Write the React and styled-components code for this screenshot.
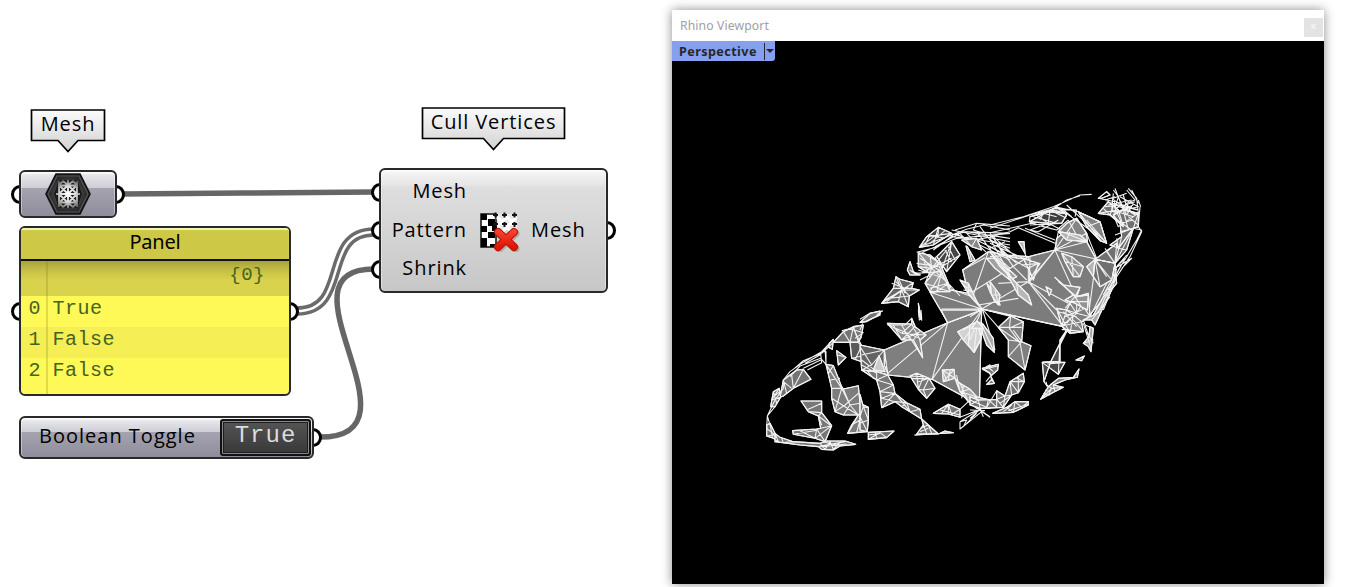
import React from "react";
import styled, { createGlobalStyle } from "styled-components";

const GlobalStyle = createGlobalStyle`
  * { box-sizing: border-box; }
  body { margin: 0; background: #fff; overflow: hidden; }
`;

const Page = styled.main`
  position: relative;
  display: flex;
  width: 1347px;
  height: 587px;
  overflow: hidden;
  font-family: "Noto Sans", "Open Sans", sans-serif;
`;

const Canvas = styled.section`
  position: relative;
  width: 672px;
  height: 587px;
  flex: none;
`;

const Wires = styled.svg`
  position: absolute;
  inset: 0;
`;

const Node = styled.div`
  position: absolute;
  left: ${(p) => p.$x}px;
  top: ${(p) => p.$y}px;
  width: ${(p) => p.$w}px;
  height: ${(p) => p.$h}px;
`;

const Body = styled.div`
  position: relative;
  display: flex;
  align-items: center;
  height: 100%;
  border: 2px solid #29292b;
  border-radius: 6px;
  overflow: hidden;
  background: ${(p) => p.$background};
  box-shadow: inset 0 2px 1px #ffffffb0, inset 1px 0 0 #ffffff60, inset -1px 0 0 #ffffff60;
`;

const steel = "linear-gradient(#ececf0 0, #cdcdd5 36%, #a5a3b0 37%, #8f8d9b 100%)";
const silver = "linear-gradient(#f6f6f6 0, #e6e6e6 12%, #dedede 14%, #c7c7c7 100%)";

const Port = styled.i`
  position: absolute;
  top: ${(p) => p.$y - 9}px;
  ${(p) => (p.$right ? "right: -8px;" : "left: -8px;")}
  width: 18px;
  height: 19px;
  border: 3.5px solid #000;
  border-radius: 50%;
  background: #fff;
`;

const Label = styled.span`
  font-family: "Open Sans", "Noto Sans", sans-serif;
  font-size: 20px;
  line-height: 28px;
  letter-spacing: ${(p) => p.$spacing ?? 0.9}px;
  color: #000;
  white-space: nowrap;
`;

const ToggleLabel = styled(Label)`
  margin-left: 18px;
  padding-bottom: 3px;
`;

const Callout = styled.div`
  position: absolute;
  left: ${(p) => p.$x}px;
  top: ${(p) => p.$y}px;
  width: ${(p) => p.$w}px;
  height: 46px;
  display: flex;
  justify-content: center;
  padding-top: 1px;
  svg { position: absolute; inset: 0; }
  span { position: relative; }
`;

const Inputs = styled.div`
  display: flex;
  flex-direction: column;
  align-items: flex-end;
  gap: 10.5px;
  width: 86px;
  padding-bottom: 2px;
`;

const OutputLabel = styled(Label)`
  padding-bottom: 2px;
`;

const CullIcon = styled.svg`
  margin-left: 11px;
  margin-right: 11px;
  flex: none;
`;

const MeshIcon = styled.svg`
  margin: auto;
`;

const PanelBody = styled(Body)`
  display: block;
  background: #fff957;
`;

const PanelTitle = styled.header`
  height: 33px;
  border-bottom: 2px solid #111;
  background: #cdc947;
  text-align: center;
  font-size: 20px;
  line-height: 27px;
  letter-spacing: -0.2px;
  box-shadow: inset 0 2px 1px #f7f5b0;
`;

const PanelPath = styled.div`
  height: 35px;
  padding-right: 24px;
  text-align: right;
  background: linear-gradient(#a9a33c, #c8c246 30%, #d8d24d 55%);
`;

const Mono = styled.span`
  font-family: "Liberation Mono", monospace;
  font-size: ${(p) => p.$size ?? 20}px;
  letter-spacing: 0.5px;
  line-height: 28px;
  color: #446321;
`;

const PanelRow = styled.div`
  display: flex;
  height: 31px;
  padding-left: 7.5px;
  gap: 11.5px;
  background: ${(p) => (p.$alt ? "#f5ee55" : "#fff957")};
  ${Mono} { line-height: 26px; }
`;

const Gutter = styled.i`
  position: absolute;
  left: 25px;
  top: 33px;
  bottom: 0;
  width: 2px;
  background: #7a78203d;
`;

const ToggleValue = styled.div`
  display: flex;
  align-items: center;
  justify-content: center;
  width: 91px;
  height: 37px;
  margin-left: auto;
  margin-right: 1px;
  padding-bottom: 3px;
  border: 2px solid #111;
  border-radius: 3px;
  background: linear-gradient(#555, #383838);
  box-shadow: inset 0 0 0 1px #888, inset 0 0 0 2px #1d1d1d;
  font: 24px/30px "Liberation Mono", monospace;
  letter-spacing: 1px;
  color: #dcdcdc;
`;

const Viewport = styled.section`
  display: flex;
  flex-direction: column;
  flex: none;
  width: 652px;
  height: 574px;
  margin-top: 10px;
  background: #fff;
  box-shadow: 0 0 10px #00000075;
`;

const TitleBar = styled.header`
  display: flex;
  justify-content: space-between;
  flex: none;
  height: 31px;
  padding: 0 1px 0 8px;
  font-size: 12.2px;
  line-height: 32px;
  letter-spacing: 0.12px;
  color: #a0a0a0;
`;

const Close = styled.div`
  width: 19px;
  height: 19px;
  margin-top: 8px;
  background: #e3e3e3;
  color: #f4f4f4;
  text-align: center;
  font: bold 9px/17px "DejaVu Sans", sans-serif;
`;

const Scene = styled.div`
  position: relative;
  flex: 1;
  background: #000;
  > svg { position: absolute; left: 0; top: 0; }
`;

const ViewName = styled.div`
  position: relative;
  z-index: 1;
  display: flex;
  align-items: center;
  width: 103px;
  height: 20px;
  padding-left: 7px;
  border-radius: 0 0 3px 0;
  background: #86a0ef;
  font: bold 12.6px/20px "Noto Sans", sans-serif;
  letter-spacing: 0.42px;
  color: #25272c;
  span { width: 86px; height: 17px; line-height: 17px; border-right: 1px solid #25272c; }
  i { margin-left: 1px; border: 4px solid transparent; border-top-color: #25272c; border-bottom: 0; }
`;

/* Mesh fragments. Each block has its own origin and is drawn at one third scale. */
const mesh = [
  {
    at: [915, 215],
    parts: [
      ["#7c7c7c", "M45,232 L98,322 200,282 445,335 520,305 605,205 600,145 543,132 515,80 485,20 425,70 420,105 340,125 270,120 220,110 143,165 160,235 105,225Z"],
      ["none", "M80,282 L200,282 160,238 M45,232 L200,282 98,322 M200,282 L340,200 420,105 M200,282 L290,305 M160,238 L230,195 340,125 M220,110 L175,240 M143,165 L210,128 M340,125 L340,200 445,335 M340,200 L460,265 M420,105 L543,132 520,305 M420,105 L470,215 M543,132 L485,20 M420,105 L515,80 M250,205 L340,200 M190,270 L310,250 M543,132 L600,180"],
    ],
  },
  {
    at: [750, 310],
    parts: [
      ["#747474", "M330,37 L360,10 390,3 390,15 375,22 345,35Z M250,97 L280,65 310,50 340,45 335,75 325,97Z M280,65 L300,97 310,50 325,95 M275,62 L325,48 M295,55 L340,68 315,85 M238,100 L250,88 247,118 235,112Z M100,210 L140,180 160,178 183,208 130,235 100,258 90,262Z M100,210 L110,250 M125,195 L130,235 160,178 M100,215 L125,235 M260,122 L288,142 265,165Z M263,135 L288,142"],
      ["#777", "M70,245 L88,235 92,262 75,290 62,290Z M88,235 L65,270 92,262 M70,245 L80,280 M68,262 L90,245 M50,345 L60,340 75,370 85,395 70,385 50,378Z M60,340 L68,385 M50,355 L75,375 50,378 M75,370 L90,382 130,395 210,400 230,393 285,393 317,403 270,408 250,420 215,418 205,410 150,405 75,395Z M210,400 L225,418 240,395 250,418 270,397 M205,410 L285,395 M220,395 L270,408 M215,410 L290,402 M95,385 L100,398 130,395"],
      ["none", "M250,88 L215,125 155,160 120,185 100,210 100,235 75,270 52,318 50,355 M247,100 L215,130 160,152 130,178 M215,125 L228,125 228,160 M212,150 L160,175 M172,180 L215,158 212,130 M225,115 L228,163 212,145 150,168 120,200 M75,290 L52,318 60,345 M210,135 L165,160 M235,105 L210,135"],
      ["#7d7d7d", "M228,163 L250,167 275,230 280,237 325,227 330,280 355,292 355,330 350,365 293,370 305,345 325,315 280,315 255,305 245,265 245,235Z M235,190 L250,167 M240,210 L270,205 M245,235 L275,235 M228,163 L275,235 255,305 M245,265 L285,290 325,315 M275,235 L300,285 280,315 M280,237 L300,285 330,280 M255,305 L285,285 325,250 M300,285 L325,315 355,292 M330,330 L305,345 M330,330 L355,330 M330,330 L350,365 M330,330 L320,368 M330,280 L330,330 L355,292 M295,368 L325,315"],
      ["#777", "M153,273 L215,273 215,308 245,347 225,395 195,385 130,373 128,362 200,357 212,355 205,318 175,305Z M170,300 L215,280 M175,305 L215,308 205,318 240,345 M200,357 L225,395 M245,347 L195,385 200,357 M212,355 L245,347 M130,373 L205,360 M205,318 L215,345 M150,362 L195,385"],
      ["#5a5a5a", "M300,97 L325,97 335,107 390,120 400,200 385,205 335,180 335,155 305,145Z M335,107 L315,150 M335,155 L350,135 390,125 M350,110 L345,140 370,165 335,180 M370,165 L390,190 M335,80 L325,97 M385,200 L390,245 M305,145 L350,135 M310,55 L335,107"],
    ],
  },
  {
    at: [860, 310],
    parts: [
      ["#7f7f7f", "M73,120 L263,38 365,0 358,285 216,208 83,195Z M263,38 L83,190 M263,38 L216,208 365,0 M243,0 L263,38"],
      ["#7f7f7f", "M243,0 L365,0 263,38Z"],
      ["#646464", "M0,105 L73,120 73,165 85,195 50,185 5,180Z M5,135 L73,120 M0,110 L35,165 5,180 M5,150 L50,185 M73,120 L35,165"],
      ["#ccc", "M57,137 L75,185 40,180Z"],
      ["#777", "M5,180 L50,210 60,245 65,293 105,275 125,290 150,305 185,327 180,298 140,278 105,250 100,225 83,195 50,185Z M50,210 L83,195 M50,210 L100,225 60,245 105,250 65,265 105,275 M105,275 L140,278 M125,290 L140,278 150,305 180,298 M60,245 L65,265 M5,165 L50,190 50,210 M20,180 L40,205 M65,293 L105,250 M105,250 L150,305 M185,327 L190,345 170,372 235,372 205,345Z M190,345 L200,370 M180,355 L205,345 215,370 M180,365 L205,355 M165,375 L280,368 255,363 240,370Z"],
      ["#747474", "M0,253 L10,290 25,293 25,330 22,365 0,360Z M10,290 L0,320 22,365 M10,290 L25,330 0,340 M25,367 L102,363 80,383 25,388Z M25,388 L60,368 80,383 M45,368 L50,385 M25,375 L60,370"],
      ["#888", "M82,40 L155,42 155,25 165,50 198,75 180,90 188,143 160,90 125,90Z M82,40 L125,70 155,42 M125,90 L165,50 M125,70 L198,75 M125,90 L180,65 M160,90 L175,70 M155,42 L180,90 M100,45 L125,90 M125,45 L150,90 M90,48 L180,85 M145,75 L188,143"],
      ["#777", "M150,198 L170,190 207,205 225,235 200,265 175,238Z M170,190 L175,238 190,200 M175,238 L190,240 225,235 M175,215 L207,205 190,240 200,265 M150,198 L190,200 M155,206 L207,205"],
      ["#a9a9a9", "M247,180 L282,178 285,205 250,215Z M247,180 L285,205 M250,215 L282,178 M260,213 L250,185 M270,182 L265,210 M285,205 L300,220 330,238 350,260 390,270 390,295 350,295 325,275 300,245Z M290,195 L300,245 330,238 M300,220 L325,275 350,260 350,295 M300,245 L350,260 M310,225 L305,265 M325,275 L390,270 M350,295 L390,275"],
      ["#d2d2d2", "M352,35 L293,65 310,90 343,127 362,90 365,40Z M352,35 L310,90 M352,35 L325,105 M352,35 L343,127 M352,35 L310,60"],
      ["#777", "M220,310 L265,283 300,298 300,322 265,312Z M265,283 L245,310 M265,283 L275,313 300,298 M240,300 L300,315 M265,283 L265,312 M300,298 L325,275 M300,322 L355,300 390,280 M300,335 L300,357 365,305 390,320 M300,335 L360,298 M300,335 L320,330 310,350"],
      ["none", "M175,0 L178,30 185,25 183,0 M390,165 L368,178 390,190Z M390,200 L378,215 M0,60 L8,40 M0,28 L30,10 68,3 M0,37 L20,35 60,12"],
    ],
  },
  {
    at: [970, 290],
    parts: [
      ["#7f7f7f", "M122,78 L160,95 155,155 183,167 165,240 115,200 115,150 85,112Z M122,78 L118,115 160,95 M118,115 L150,158 85,112 M115,150 L155,155 115,200 M150,158 L165,240 M85,112 L155,112 M130,120 L155,155 183,167"],
      ["none", "M37,57 L85,112 L115,150 M37,57 L122,78 M37,57 L275,108 M37,57 L75,180 M37,57 L0,80 M37,57 L0,5 M37,57 L20,95"],
      ["#aaa", "M37,100 L70,145 73,187 50,165 37,130Z M37,110 L73,187"],
      ["#d4d4d4", "M22,95 L0,105 -5,165 12,187 33,145Z M22,95 L12,187 M22,95 L0,150"],
      ["#777", "M37,235 L85,223 83,240 62,258 73,280 50,283 65,268 60,250Z M50,228 L70,245 M40,238 L83,228 M65,268 L73,280"],
      ["#747474", "M0,320 L25,330 80,328 80,302 105,318 120,275 160,250 163,275 145,308 125,315 100,352 30,355 0,345Z M0,345 L25,330 30,352 M50,352 L55,328 80,352 80,328 100,352 105,318 80,328 M105,318 L125,315 120,275 145,308 M120,275 L163,275 140,265 M0,330 L50,352 80,302 M90,340 L125,315 M145,258 L145,308 M68,370 L110,352 135,335 175,335 175,345 130,367Z M110,352 L130,367 135,335 155,352 175,335 M100,365 L125,345 M115,362 L175,343 M0,385 L30,358 60,382 M20,370 L-10,400 M0,360 L45,362 M30,358 L40,380"],
      ["#4a4a4a", "M290,120 L242,215 270,215 270,150Z M217,217 L285,217 265,253Z M217,217 L242,215 222,275Z M232,222 L285,217 M270,155 L265,253 M222,275 L232,290 228,275"],
      ["#888", "M212,328 L235,290 265,265 310,262 327,237 322,262 285,270 250,285 280,292 235,315Z M212,328 L245,295 230,285 M235,315 L245,295 280,292 M250,285 L255,305 M220,310 L240,315 M225,300 L240,305 M265,265 L240,285 M310,262 L320,250 M318,210 L343,198 335,212Z"],
      ["#808080", "M275,108 L260,55 290,60 300,40 320,20 355,10 360,80 335,95 340,125 300,130Z M275,108 L290,60 335,95 M260,55 L300,130 M300,40 L290,60 320,70 360,80 M275,108 L335,95 M275,108 L320,70 300,40 M320,20 L320,70 355,10 M285,80 L335,60 M290,100 L310,75 300,130 M320,20 L360,80 M280,65 L320,110 M310,90 L340,125 M265,65 L320,80 M275,118 L340,125"],
      ["#aaa", "M340,90 L370,75 400,20 430,-10 400,50 375,105 365,90Z M340,90 L390,65 M365,90 L420,20 M375,105 L405,40 M357,140 L340,160 355,170 363,185 370,115 360,110Z M350,125 L370,160 M340,160 L370,150 M340,100 L363,175 M345,105 L370,115"],
      ["none", "M275,108 L290,125 270,165 M340,90 L357,140 M420,-40 L360,80"],
    ],
  },
  {
    at: [880, 220],
    parts: [
      ["#666", "M5,250 L40,205 48,170 60,178 100,188 95,205 118,210 88,228 85,260 55,245Z M65,210 L5,250 M65,210 L48,170 M65,210 L100,188 M65,210 L118,210 M65,210 L85,260 M65,210 L55,245 M65,210 L20,245 M40,205 L95,205 M35,190 L75,205 40,230 M48,185 L88,228 25,235 M15,240 L85,200 M55,175 L75,220"],
      ["#777", "M90,125 L82,150 90,165 120,165 100,155Z M90,150 L110,165 M115,250 L125,300 118,290Z M-10,285 L8,272 M22,315 L75,315 95,295 108,325"],
      ["#454545", "M118,82 L140,50 175,22 215,40 160,75Z M118,82 L175,40 175,22 M140,50 L215,40 M150,70 L195,32 M135,75 L150,45 195,55 M175,22 L160,75 M215,65 L240,105 200,155 170,110Z M215,65 L200,155 M215,65 L185,150 M240,105 L185,140 M205,80 L225,120 M195,90 L215,125"],
      ["#969696", "M115,98 L150,105 180,130 205,190 210,215 150,215 135,190 155,165 115,140Z M155,145 L115,98 M155,145 L115,140 M155,145 L150,105 M155,145 L205,190 M155,145 L135,190 M155,145 L215,115 M155,145 L200,90 M185,155 L120,115 M185,155 L105,160 M185,155 L150,215 M185,155 L210,215 M185,155 L165,110 M185,155 L170,215 205,190 150,205 M110,130 L175,140 M125,95 L180,130 115,165 M115,150 L180,170 M135,190 L210,215 M120,180 L180,150 M130,115 L150,175"],
      ["none", "M120,80 L215,45 260,35 390,55 M110,97 L175,80 215,50 300,60 390,75 M225,30 L290,10 390,18 M245,35 L390,40 M225,40 L330,90 390,120 M205,190 L240,228 M175,150 L215,208 270,228 M215,30 L390,65 M215,45 L260,28 310,15 390,30 M230,55 L390,40 M290,35 L340,100 390,145 M260,40 L290,70 320,98 M165,80 L240,40 M210,40 L280,60 340,50 390,95 M300,20 L330,60 390,85 M290,60 L390,110 M160,90 L220,45 M130,95 L230,55"],
      ["#888", "M258,78 L270,125 285,120 262,80Z M265,85 L275,120 M245,60 L290,55 305,90 275,80Z M245,60 L275,80 290,55 M240,40 L275,80 M290,10 L280,30 310,40"],
      ["#c7c7c7", "M240,180 L265,190 295,255 265,220Z M245,190 L275,215 250,210 M265,190 L265,220 M320,190 L350,225 360,255 345,245 330,215Z M330,215 L350,225 M275,325 L290,303 310,325Z"],
      ["#a2a2a2", "M320,115 L350,115 410,170 390,180 345,145Z M345,120 L390,155"],
    ],
  },
  {
    at: [990, 180],
    parts: [
      ["#3f3f3f", "M118,125 L200,80 230,105 215,130 175,130Z M120,110 L190,90 225,100 180,95Z"],
      ["#858585", "M230,130 L260,115 290,160 292,185 270,185 205,155Z M265,95 L330,125 350,190 330,182 290,140Z"],
      ["none", "M0,135 L100,110 190,80 270,45 305,43 M200,80 L230,60 270,47 M0,145 L120,105 195,85 M0,158 L90,138 125,130 200,150 M0,170 L60,155 85,143 195,190 M118,125 L120,110 195,85 260,90 M195,80 L265,95 330,125 350,190 M200,90 L180,95 225,100 M200,80 L300,150 335,185 M120,135 L215,130 230,105 M175,130 L180,90 230,115 M175,130 L120,150 145,155 205,120 M175,130 L215,150 M175,130 L140,105 M118,125 L160,140 200,150 235,120 M205,155 L230,130 260,115 290,160 320,235 M205,155 L292,185 M205,155 L195,210 M235,120 L270,185 M290,160 L195,210 M260,115 L195,210 M230,75 L290,130 350,190 M330,125 L290,140 M265,95 L335,185 M290,120 L350,190 M105,145 L195,180 M150,120 L160,100 200,110 M130,110 L200,130 M205,90 L260,90 255,110 M215,85 L245,110"],
      ["#b5b5b5", "M205,155 L270,165 292,185 230,180Z M215,155 L292,185 M240,155 L230,180 M290,260 L315,238 310,290Z"],
      ["#939393", "M215,220 L245,230 280,260 270,290 250,290 225,245Z M225,245 L280,260 M215,220 L270,290 M245,230 L250,290 M195,292 L220,315 270,322 260,350 295,345 292,390 255,370 225,360 250,345Z M255,350 L225,320 M255,350 L270,322 M255,350 L225,385 M255,350 L295,345 M255,350 L280,390 M205,305 L260,350 M230,365 L292,365 M168,320 L185,330 178,347Z"],
      ["#b7b7b7", "M85,185 L102,185 105,220Z M45,270 L80,310 115,345 125,375 85,345Z M80,310 L85,345 M60,290 L115,345 M0,215 L45,270 60,290 30,260Z M0,305 L30,345 25,375 5,345Z M5,345 L30,345 M15,330 L25,375"],
      ["#8a8a8a", "M100,235 L145,250 130,300 115,265Z M100,235 L130,300 M95,255 L150,250 115,305 M115,265 L145,250 M120,230 L118,305"],
      ["none", "M105,220 L110,235 M0,160 L70,260 110,300 M0,175 L60,285 M0,190 L100,235 M0,200 L115,265 M0,215 L80,235 110,235 M10,170 L40,225 115,240 M0,180 L45,205 80,230 M0,205 L45,185 M5,165 L35,210 M0,230 L75,225 M20,195 L80,250 M115,310 L195,210 M120,310 L200,390"],
      ["#707070", "M325,100 L355,65 385,90 400,140 360,105Z M370,105 L400,90 445,100 445,140 430,145 385,205 360,195 395,170 390,130Z M315,238 L380,190 385,205 430,145 410,210 375,250Z M315,238 L375,250 365,300 330,320 310,290Z"],
      ["none", "M325,55 L350,35 360,45 335,55Z M325,100 L385,90 M340,85 L360,105 375,65 M325,55 L375,65 M345,60 L375,50 M370,30 L385,50 375,85 400,140 M375,25 L400,90 370,105 M415,25 L440,55 445,100 410,90 M425,30 L445,70 M390,50 L445,80 400,90 M350,65 L440,90 M365,55 L435,105 M355,75 L425,60 M375,85 L435,65 M370,100 L430,75 M400,45 L415,100 M380,40 L410,105 430,70 M365,70 L445,105 M410,30 L435,60 410,70 425,100 M345,80 L400,75 445,90 M370,40 L365,90 430,110 M370,55 L410,40 M360,105 L425,150 M370,105 L385,140 445,100 M400,90 L415,150 M445,100 L430,145 455,150 440,180 410,230 385,270 350,350 M452,80 L445,60 M450,80 L445,140 455,155 420,230 380,290 340,390 M415,110 L445,135 M390,130 L430,120 M390,155 L445,140 M375,165 L430,145 375,250 315,238 M380,190 L375,250 M380,175 L385,205 M395,170 L375,250 M345,205 L375,250 M385,205 L410,210 M380,190 L350,215 375,250 M315,238 L310,290 M315,238 L330,320 M315,238 L350,290 M315,238 L365,300 M375,250 L370,290 M410,225 L375,265 425,235 395,265 M385,255 L405,235 M375,290 L355,330 M400,245 L370,300 380,265 M365,300 L340,345 375,300 M350,340 L330,390"],
    ],
  },
];

/* Closed outlines are shaded faces; open runs are only edges. */
const faces = (d) => d.split("M").filter((run) => run.includes("Z"));

function MeshDrawing() {
  return (
    <svg width="652" height="543" viewBox="672 41 652 543">
      {mesh.map((block) => (
        <g key={block.at.join()} transform={`translate(${block.at[0]} ${block.at[1]}) scale(.33333)`} stroke="#f2f2f2" strokeWidth="3.3" strokeLinejoin="round">
          {block.parts.map(([fill, d], i) => (
            <g key={i}>
              {faces(d).map((run, j) => <path key={j} fill={fill} d={`M${run}`} />)}
              <path fill="none" d={d} />
            </g>
          ))}
        </g>
      ))}
    </svg>
  );
}

function Tag({ x, y, w, spacing, children }) {
  const c = w / 2;
  return (
    <Callout $x={x} $y={y} $w={w}>
      <svg width={w} height="46">
        <defs><linearGradient id={`tag${w}`} x2="0" y2="1"><stop stopColor="#fbfbfb" /><stop offset="1" stopColor="#d2d2d2" /></linearGradient></defs>
        <path d={`M1.500,1 H${w - 1.5} V31.500 H${c + 10} L${c},42.500 ${c - 10},31.500 H1.500Z`} fill={`url(#tag${w})`} stroke="#000" strokeWidth="1.7" />
      </svg>
      <Label $spacing={spacing}>{children}</Label>
    </Callout>
  );
}

function HexIcon() {
  return (
    <MeshIcon width="46" height="42" viewBox="0 0 46 42">
      <defs>
        <radialGradient id="hex"><stop stopColor="#888" /><stop offset=".5" stopColor="#444" /><stop offset="1" stopColor="#222" /></radialGradient>
        <radialGradient id="glow" gradientUnits="userSpaceOnUse" cx="23" cy="21" r="18"><stop stopColor="#fff" /><stop offset=".45" stopColor="#d5d5d5" /><stop offset="1" stopColor="#3a3a3a" /></radialGradient>
      </defs>
      <path d="M11,1 H35 L45,21 35,41 H11 L1,21Z" fill="url(#hex)" stroke="#111" strokeWidth="1.6" />
      <path d="M12,3 H34 L43,21 34,39 H12 L3,21Z" fill="none" stroke="#555" strokeWidth="1.2" />
      <path d="M14,7 H32 L37,21 32,35 H14 L9,21Z" fill="#1b1b1b" />
      <path d="M15,12.500 H31 M11,21 H35 M15,29.500 H31 M14,8 V34 M23,7 V35 M32,8 V34 M14,12 L32,30 M32,12 L14,30 M14,21 L23,12 32,21 23,30Z M14,12 L18,8 23,12 28,8 32,12 M14,30 L18,34 23,30 28,34 32,30" fill="none" stroke="url(#glow)" strokeWidth="1.9" />
    </MeshIcon>
  );
}

function CullVerticesIcon() {
  return (
    <CullIcon width="42" height="42" viewBox="0 0 42 42">
      <defs><linearGradient id="cross" x2="0" y2="1"><stop stopColor="#f5402a" /><stop offset="1" stopColor="#df1504" /></linearGradient></defs>
      <rect x="16" y="4" width="23" height="15" fill="#e9e9e9" />
      <rect x="3" y="4" width="15" height="33" fill="#fff" stroke="#111" strokeWidth="1.5" />
      <path d="M3,4h6v6h-6z M10,9h7v7h-7z M3,16h6v6h-6z M10,22h7v6h-7z M3,28h6v9h-6z M12,34h6v3h-6z M14,16h5v5h-5z" fill="#000" />
      <path d="M19,7l5,5-4,5M24,12l5-5 5,5 4-5M19,15l5-3 5,5 5-5 4,5M24,12l5,5-5,5M34,12l-5,5 5,5" stroke="#fff" strokeWidth="3" fill="none" />
      <path d="M15,5h5M17.500,2.500v5M24,5h5M26.500,2.500v5M34,5h5M36.500,2.500v5M15,14h5M17.500,12v5M24,14h5M26.500,12v5M34,14h5M36.500,12v5" stroke="#151515" strokeWidth="2" />
      <path d="M20,22L36,37M36,22L20,37" stroke="#76766e" opacity=".4" strokeWidth="8" strokeLinecap="round" transform="translate(1.5 1.5)" />
      <path d="M20,22L36,37M36,22L20,37" stroke="#b41308" strokeWidth="8" strokeLinecap="round" />
      <path d="M20,22L36,37M36,22L20,37" stroke="url(#cross)" strokeWidth="6" strokeLinecap="round" />
    </CullIcon>
  );
}

export default function App() {
  return (
    <Page>
      <GlobalStyle />
      <Canvas>
        <Wires width="672" height="587" fill="none">
          <path d="M122,194 C210,194 285,192 374,192" stroke="#666" strokeWidth="5.500" />
          <path d="M297,311 C351,311 320,232 374,232" stroke="#6b6b6b" strokeWidth="9.500" />
          <path d="M297,311 C351,311 320,232 374,232" stroke="#fff" strokeWidth="2.500" />
          <path d="M320,437 C430,437 270,269 374,269" stroke="#666" strokeWidth="5.500" />
        </Wires>

        <Tag x={30} y={109} w={76} spacing={0.9}>Mesh</Tag>
        <Tag x={421} y={107} w={145} spacing={0.9}>Cull Vertices</Tag>

        <Node $x={19} $y={170} $w={98} $h={48}>
          <Port $y={24} /><Port $y={24} $right />
          <Body $background={steel}><HexIcon /></Body>
        </Node>

        <Node $x={19} $y={226} $w={272} $h={170}>
          <Port $y={85} /><Port $y={85} $right />
          <PanelBody>
            <PanelTitle>Panel</PanelTitle>
            <PanelPath><Mono $size={19}>{"{0}"}</Mono></PanelPath>
            {["True", "False", "False"].map((value, i) => (
              <PanelRow key={i} $alt={i === 1}><Mono>{i}</Mono><Mono>{value}</Mono></PanelRow>
            ))}
            <Gutter />
          </PanelBody>
        </Node>

        <Node $x={19} $y={416} $w={295} $h={43}>
          <Port $y={21} $right />
          <Body $background={steel}>
            <ToggleLabel $spacing={1}>Boolean Toggle</ToggleLabel>
            <ToggleValue>True</ToggleValue>
          </Body>
        </Node>

        <Node $x={379} $y={168} $w={229} $h={125}>
          <Port $y={24} /><Port $y={62} /><Port $y={101} /><Port $y={62} $right />
          <Body $background={silver}>
            <Inputs><Label>Mesh</Label><Label>Pattern</Label><Label>Shrink</Label></Inputs>
            <CullVerticesIcon />
            <OutputLabel>Mesh</OutputLabel>
          </Body>
        </Node>
      </Canvas>

      <Viewport>
        <TitleBar><span>Rhino Viewport</span><Close>x</Close></TitleBar>
        <Scene>
          <ViewName><span>Perspective</span><i /></ViewName>
          <MeshDrawing />
        </Scene>
      </Viewport>
    </Page>
  );
}
